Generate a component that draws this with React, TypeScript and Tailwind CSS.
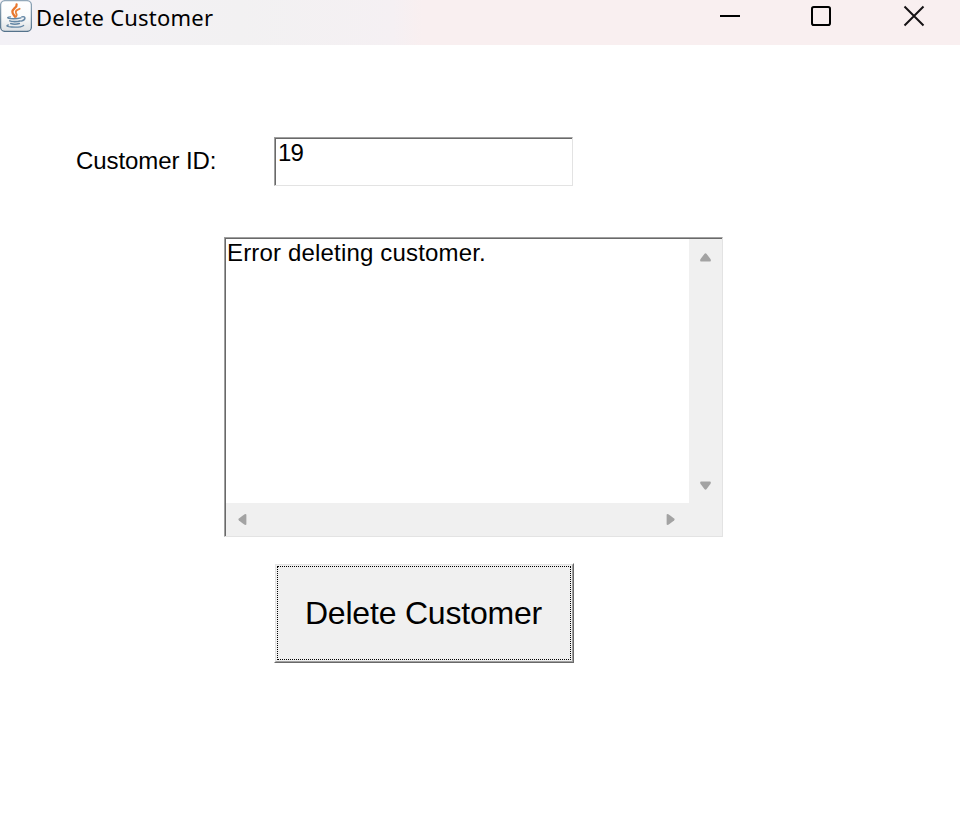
import React from "react";

function JavaIcon() {
  return (
    <svg width="32" height="32" viewBox="0 0 32 32" fill="none" className="shrink-0">
      <defs>
        <linearGradient id="tile" x1="0" y1="0" x2="0" y2="1">
          <stop offset="0" stopColor="#fff" />
          <stop offset="0.5" stopColor="#fbfcfc" />
          <stop offset="1" stopColor="#dde1e4" />
        </linearGradient>
        <linearGradient id="edge" x1="0" y1="0" x2="0" y2="1">
          <stop offset="0" stopColor="#93a9ba" />
          <stop offset="1" stopColor="#54728b" />
        </linearGradient>
      </defs>
      <rect x="0.6" y="0.6" width="30.8" height="30.8" rx="4.5" fill="url(#tile)" stroke="url(#edge)" strokeWidth="1.3" />
      <path d="M16.600 4.400C17.300 7.500 12.400 8.600 12.400 11.800C12.400 13.800 14 15 15 16.700" stroke="#e8772e" strokeWidth="2.300" strokeLinecap="round" />
      <path d="M19.600 8.800C16.500 9.800 15.400 11 16 12.800C16.900 14.200 17.200 15 16 16.600" stroke="#ea8138" strokeWidth="1.900" strokeLinecap="round" />
      <g stroke="#6487a5" strokeLinecap="round">
        <path d="M10.500 16.900C6.500 17.400 7 18.400 10 18.600C14 18.900 18.500 18.600 21 17.900" strokeWidth="1.300" />
        <path d="M21.800 16.900C26 15.800 26.200 19.800 21.200 21.100" strokeWidth="1.400" />
        <path d="M9.800 20.900C11.800 21.900 17.500 21.800 20 20.900" strokeWidth="1.600" />
        <path d="M10.800 23.500C12.800 24.300 17.200 24.200 19.300 23.500" strokeWidth="1.600" />
        <path d="M8.300 25C5.300 25.800 7.500 26.800 11.500 27C17 27.300 22 26.700 23.600 25.400" strokeWidth="1.300" />
      </g>
    </svg>
  );
}

function TitleBar() {
  return (
    <header className="flex h-[45px] items-start bg-[linear-gradient(to_right,#f3f1f6_0%,#f3f1f4_12%,#f2f1f2_25%,#f5f0f3_41%,#f9eff0_44%,#f9eff0_100%)]">
      <JavaIcon />
      <h1 className="ml-[4px] mt-px whitespace-nowrap font-['Noto_Sans',sans-serif] text-[22px] leading-[32px] tracking-[0.22px] text-black">
        Delete Customer
      </h1>
      <svg width="260" height="44" viewBox="700 0 260 44" fill="none" stroke="#000" className="ml-auto">
        <path d="M720 16H740" strokeWidth="2" />
        <rect x="812" y="7" width="18" height="18" rx="1.8" strokeWidth="2" />
        <path d="M904.5 6.5L923.5 25.5M923.5 6.5L904.5 25.5" strokeWidth="2" stroke="#151214" />
      </svg>
    </header>
  );
}

function Arrow({ turn }: { turn: string }) {
  return (
    <svg width="13" height="11" viewBox="0 0 13 11" className={turn}>
      <path d="M5.4 1.9Q6.5.7 7.6 1.9L11.6 7.2Q12.4 9.4 11 9.4H2Q.6 9.4 1.4 7.200Z" fill="#a3a3a3" />
    </svg>
  );
}

const sunken =
  "border border-t-[#a0a0a0] border-l-[#a0a0a0] border-r-[#e3e3e3] border-b-[#e3e3e3]";
const sunkenInner = "border-t border-l border-[#696969]";

export default function App() {
  return (
    <div className="h-[830px] w-[960px] overflow-hidden bg-white font-['Liberation_Sans',Arial,sans-serif] text-[24px] leading-[28px] text-black">
      <TitleBar />
      <main className="pt-[92px]">
        <div className="flex h-[49px] items-start">
          <label className="ml-[76px] mt-[10px] w-[198px] whitespace-nowrap tracking-[-0.08px]">Customer ID:</label>
          <div className={`h-[49px] w-[299px] ${sunken}`}>
            <div className={`h-full pl-[2px] tracking-[-0.8px] ${sunkenInner}`}>19</div>
          </div>
        </div>

        <div className={`ml-[224px] mt-[51px] h-[300px] w-[499px] ${sunken}`}>
          <div className={`grid h-full grid-cols-[1fr_33px] grid-rows-[1fr_33px] bg-[#f0f0f0] ${sunkenInner}`}>
            <div className="bg-white pl-[1px] tracking-[0.17px]">Error deleting customer.</div>
            <div className="flex flex-col items-center justify-between pb-[12px] pt-[13px]">
              <Arrow turn="" />
              <Arrow turn="rotate-180" />
            </div>
            <div className="flex items-center justify-between pl-[10px] pr-[12px]">
              <Arrow turn="-rotate-90" />
              <Arrow turn="rotate-90" />
            </div>
          </div>
        </div>

        <button className="ml-[274px] mt-[26px] block h-[100px] w-[300px] border border-t-white border-l-white border-r-[#696969] border-b-[#696969] bg-[#f0f0f0]">
          <span className="block h-full border border-t-[#e3e3e3] border-l-[#e3e3e3] border-r-[#a0a0a0] border-b-[#a0a0a0] p-px">
            <span className="flex h-full items-center justify-center border border-dotted border-black pr-px text-[32px] leading-[36px] tracking-[-0.2px]">
              Delete Customer
            </span>
          </span>
        </button>
      </main>
    </div>
  );
}
